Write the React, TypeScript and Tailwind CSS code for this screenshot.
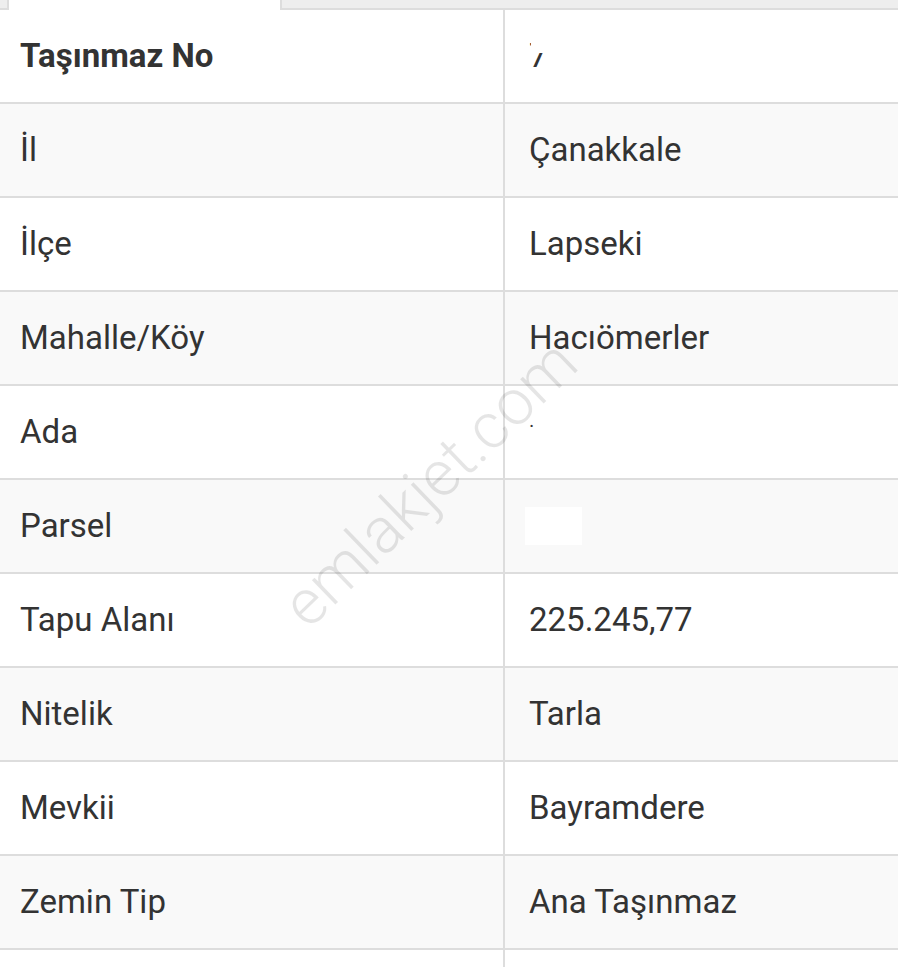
import React from "react";

const rows: { label: string; value: React.ReactNode; bold?: boolean }[] = [
  { label: "Taşınmaz No", value: "7", bold: true },
  { label: "İl", value: "Çanakkale" },
  { label: "İlçe", value: "Lapseki" },
  { label: "Mahalle/Köy", value: "Hacıömerler" },
  { label: "Ada", value: "·" },
  { label: "Parsel", value: "" },
  { label: "Tapu Alanı", value: "225.245,77" },
  { label: "Nitelik", value: "Tarla" },
  { label: "Mevkii", value: "Bayramdere" },
  { label: "Zemin Tip", value: "Ana Taşınmaz" },
  { label: "", value: "" },
];

export default function App() {
  return (
    <div
      className="relative w-[898px] h-[967px] overflow-hidden bg-white text-[#333333]"
      style={{ fontFamily: "Roboto, 'Liberation Sans', sans-serif" }}
    >
      <div className="flex h-[10px]">
        <div className="w-[9px] bg-[#eeeeee] border-r-2 border-b-2 border-[#dddddd]" />
        <div className="w-[271px] bg-white" />
        <div className="flex-1 bg-[#eeeeee] border-l-2 border-b-2 border-[#dddddd]" />
      </div>
      <div className="flex flex-col">
        {rows.map((r, i) => (
          <div
            key={i}
            className={`flex h-[94px] shrink-0 border-b-2 border-[#dddddd] ${i % 2 === 1 ? "bg-[#f9f9f9]" : "bg-white"}`}
          >
            <div
              className={`w-[505px] shrink-0 border-r-2 border-[#dddddd] flex items-center pl-5 text-[33px] ${r.bold ? "font-bold" : ""}`}
            >
              {r.label}
            </div>
            <div className="relative flex-1 flex items-center pl-6 text-[33px]">
              {r.label === "Parsel" ? (
                <div className="w-[57px] h-[38px] bg-white -ml-1" />
              ) : r.label === "Ada" ? (
                <span className="text-[20px] -mt-[12px]">·</span>
              ) : r.label === "Taşınmaz No" ? (
                <span className="relative">
                  7
                  <span className="absolute left-[2px] top-[9px] w-[18px] h-[13px] bg-white" />
                </span>
              ) : (
                r.value
              )}
            </div>
          </div>
        ))}
      </div>
      <div
        className="pointer-events-none absolute left-[430px] top-[484px] text-[64px] font-light text-[#000000]/[0.1] whitespace-nowrap"
        style={{ transform: "translate(-50%, -50%) rotate(-44deg)" }}
      >
        emlakjet.com
      </div>
    </div>
  );
}
